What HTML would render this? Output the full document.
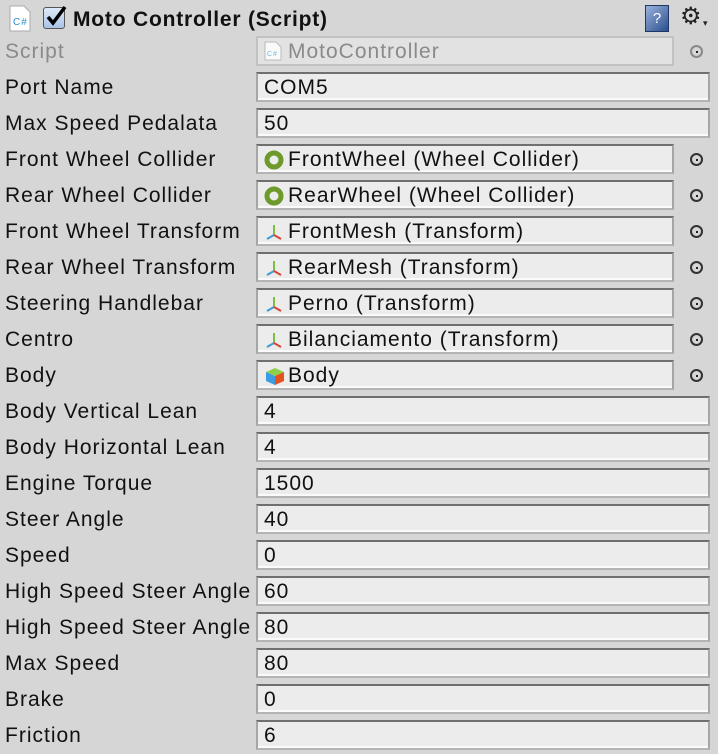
<!DOCTYPE html>
<html><head><style>
body{margin:0;width:718px;height:754px;background:#d6d6d6;font-family:"Liberation Sans",sans-serif;font-size:21px;letter-spacing:1.0px;color:#111;position:relative;overflow:hidden}
.l{position:absolute;left:5px;height:30px;line-height:32px;white-space:nowrap}
.f{position:absolute;left:256px;width:454px;height:30px;box-sizing:border-box;background:#ececec;border-top:2px solid #6f6f6f;border-left:2px solid #a6a6a6;border-right:2px solid #a6a6a6;border-bottom:2px solid #b4b4b4;box-shadow:inset 0 -2px 0 #fbfbfb;line-height:28px;padding-left:6px;white-space:nowrap}
.o{width:418px;padding-left:30px}
.t{position:absolute;left:690px;width:13px;height:13px;border:2px solid #333;border-radius:50%;box-sizing:border-box}
.t:after{content:"";position:absolute;left:3.5px;top:3.5px;width:2px;height:2px;background:#222}
.ic{position:absolute;left:6px;top:4px}
</style></head><body>
<svg style="position:absolute;left:9px;top:5px" width="22" height="27"><path d="M1 1h14l6 6v19H1z" fill="#fff" stroke="#aaa"/><text x="4" y="20" font-size="10" fill="#2b8bd0" font-family="Liberation Sans">C#</text></svg>
<div style="position:absolute;left:43px;top:7px;width:22px;height:22px;box-sizing:border-box;border:1px solid #555;border-radius:3px;background:linear-gradient(#dfeaf8,#a9c3e6)"></div>
<svg style="position:absolute;left:44px;top:4px" width="24" height="24"><path d="M4 13l5 6L21 3" fill="none" stroke="#000" stroke-width="3.5"/></svg>
<div style="position:absolute;left:73px;top:6px;font-weight:bold;line-height:28px;letter-spacing:0.8px">Moto Controller (Script)</div>
<div style="position:absolute;left:645px;top:5px;width:24px;height:27px;background:linear-gradient(135deg,#9ab3dc,#2b4f8f);border:1px solid #1f3564;box-sizing:border-box;color:#fff;font-size:15px;text-align:center;line-height:25px;letter-spacing:0">?</div>
<div style="position:absolute;left:680px;top:2px;font-size:24px;color:#222;letter-spacing:0">⚙</div>
<div style="position:absolute;left:703px;top:18px;font-size:9px;color:#222">▾</div>

<div class="l" style="top:36px;color:#8a8a8a">Script</div>
<div class="f o" style="top:36px;background:#e2e2e2;border-color:#c2c2c2;box-shadow:none;color:#8a8a8a"><svg class="ic" style="top:3px" width="18" height="20"><path d="M1 1h11l5 5v13H1z" fill="#fafafa" stroke="#bbb"/><text x="3" y="15" font-size="7" fill="#79b5df">C#</text></svg>MotoController</div>
<div class="t" style="top:45px;border-color:#888"></div>

<div class="l" style="top:72px">Port Name</div><div class="f" style="top:72px">COM5</div>
<div class="l" style="top:108px">Max Speed Pedalata</div><div class="f" style="top:108px">50</div>

<div class="l" style="top:144px">Front Wheel Collider</div>
<div class="f o" style="top:144px"><svg class="ic" width="20" height="20"><circle cx="10" cy="10" r="7" fill="none" stroke="#6d9a2a" stroke-width="5"/></svg>FrontWheel (Wheel Collider)</div><div class="t" style="top:153px"></div>
<div class="l" style="top:180px">Rear Wheel Collider</div>
<div class="f o" style="top:180px"><svg class="ic" width="20" height="20"><circle cx="10" cy="10" r="7" fill="none" stroke="#6d9a2a" stroke-width="5"/></svg>RearWheel (Wheel Collider)</div><div class="t" style="top:189px"></div>

<div class="l" style="top:216px">Front Wheel Transform</div>
<div class="f o" style="top:216px"><svg class="ic" width="20" height="20"><path d="M10 3v10" stroke="#7cc043" stroke-width="2"/><path d="M10 13l-7 4" stroke="#3a9bd8" stroke-width="2"/><path d="M10 13l7 4" stroke="#d8443a" stroke-width="2"/></svg>FrontMesh (Transform)</div><div class="t" style="top:225px"></div>
<div class="l" style="top:252px">Rear Wheel Transform</div>
<div class="f o" style="top:252px"><svg class="ic" width="20" height="20"><path d="M10 3v10" stroke="#7cc043" stroke-width="2"/><path d="M10 13l-7 4" stroke="#3a9bd8" stroke-width="2"/><path d="M10 13l7 4" stroke="#d8443a" stroke-width="2"/></svg>RearMesh (Transform)</div><div class="t" style="top:261px"></div>
<div class="l" style="top:288px">Steering Handlebar</div>
<div class="f o" style="top:288px"><svg class="ic" width="20" height="20"><path d="M10 3v10" stroke="#7cc043" stroke-width="2"/><path d="M10 13l-7 4" stroke="#3a9bd8" stroke-width="2"/><path d="M10 13l7 4" stroke="#d8443a" stroke-width="2"/></svg>Perno (Transform)</div><div class="t" style="top:297px"></div>
<div class="l" style="top:324px">Centro</div>
<div class="f o" style="top:324px"><svg class="ic" width="20" height="20"><path d="M10 3v10" stroke="#7cc043" stroke-width="2"/><path d="M10 13l-7 4" stroke="#3a9bd8" stroke-width="2"/><path d="M10 13l7 4" stroke="#d8443a" stroke-width="2"/></svg>Bilanciamento (Transform)</div><div class="t" style="top:333px"></div>
<div class="l" style="top:360px">Body</div>
<div class="f o" style="top:360px"><svg class="ic" width="22" height="20"><path d="M2 6l9-4 9 4-9 4z" fill="#8fcf4a"/><path d="M2 6l9 4v9l-9-4z" fill="#3d9be0"/><path d="M20 6l-9 4v9l9-4z" fill="#e8501e"/></svg>Body</div><div class="t" style="top:369px"></div>

<div class="l" style="top:396px">Body Vertical Lean</div><div class="f" style="top:396px">4</div>
<div class="l" style="top:432px">Body Horizontal Lean</div><div class="f" style="top:432px">4</div>
<div class="l" style="top:468px">Engine Torque</div><div class="f" style="top:468px">1500</div>
<div class="l" style="top:504px">Steer Angle</div><div class="f" style="top:504px">40</div>
<div class="l" style="top:540px">Speed</div><div class="f" style="top:540px">0</div>
<div class="l" style="top:576px">High Speed Steer Angle</div><div class="f" style="top:576px">60</div>
<div class="l" style="top:612px">High Speed Steer Angle</div><div class="f" style="top:612px">80</div>
<div class="l" style="top:648px">Max Speed</div><div class="f" style="top:648px">80</div>
<div class="l" style="top:684px">Brake</div><div class="f" style="top:684px">0</div>
<div class="l" style="top:720px">Friction</div><div class="f" style="top:720px">6</div>
</body></html>
